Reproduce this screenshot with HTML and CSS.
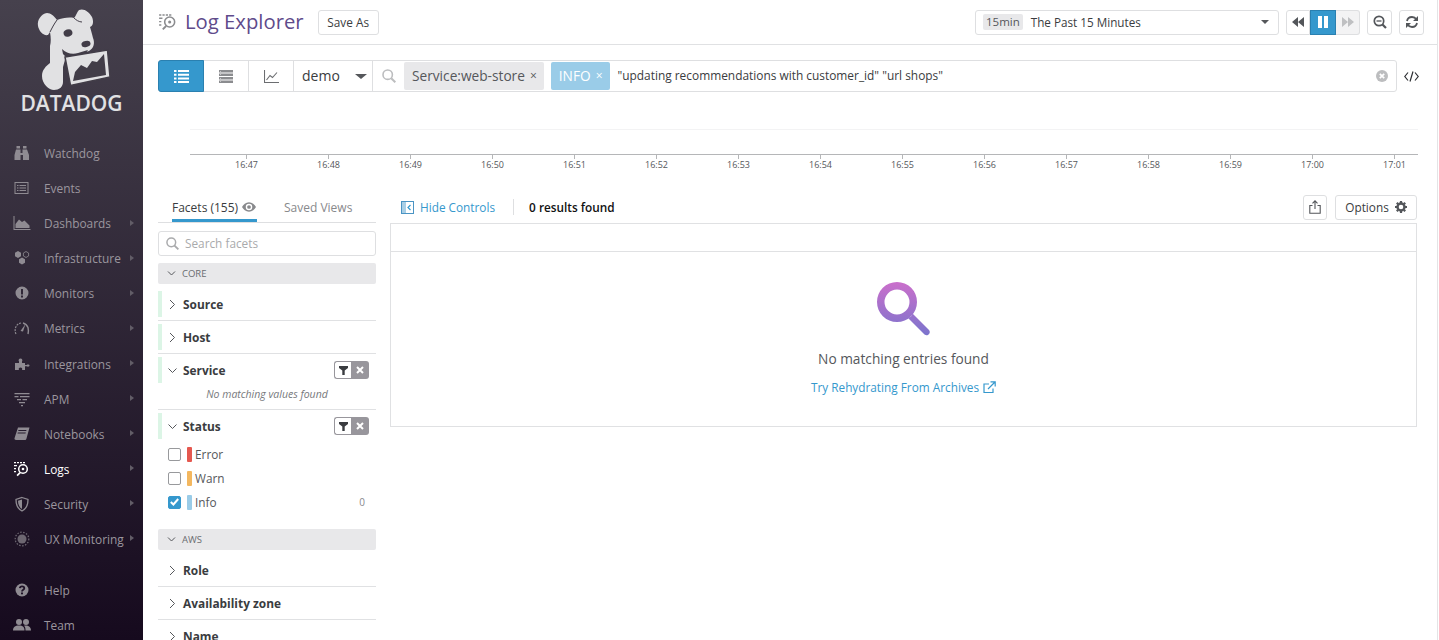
FILE: index.html
```html
<!DOCTYPE html>
<html lang="en">
<head>
    <meta charset="UTF-8">
    <meta name="viewport" content="width=device-width, initial-scale=1.0">
    <title>Log Explorer</title>
    <link rel="stylesheet" href="styles.css">
</head>
<body>
    <nav class="sidebar">
        <div class="logo">
            <svg class="logo-dog" width="143" height="94" viewBox="0 0 143 94">
                <path fill="#e1e1e3" d="M47 13C41 14 37 20 38 26C39 31 43 36 48 35L50 32C51 38 51 42 50 46L50 63C46 66 42 70 42 76C42 84 49 90 54 90C59 90 63 87 63 82L63 67L66 56L72 55C78 54 84 53 89 51C94 48 95 43 93 38C92 34 91 30 90 27C93 26 94 22 92 17C89 12 84 8 79 10C77 12 76 16 74 18C69 17 62 18 57 20C54 16 51 13 47 13Z"/>
                <path fill="none" stroke="#423d48" stroke-width="1" d="M50 32C52 28 54 24 57 20M74 18C76 20 79 22 82 22"/>
                <path fill="#423d48" d="M62 49C66 53 72 55 78 53L88 50L86 53L66 57L63 54Z"/>
                <ellipse fill="#423d48" cx="68" cy="33" rx="4.500" ry="3.600" transform="rotate(-20 68 33)"/>
                <ellipse fill="#423d48" cx="86" cy="44" rx="4.600" ry="3" transform="rotate(-12 86 44)"/>
                <path fill="#e1e1e3" stroke="#423d48" stroke-width="1.500" d="M65 57L107.500 50L110 77L70.500 85.500Z"/>
                <path fill="#423d48" d="M73 81L75 72L81 65L87 68L92 61L97 62L104 54L106 75Z"/>
            </svg>
            <div class="logo-name">DATADOG</div>
        </div>
        <div class="nav-list">
            <a class="nav-item">
                <svg class="nav-icon" viewBox="0 0 18 18"><path d="M3.500 2h3.500v2.500H3.500zM10 2h3.500v2.500H10zM3 5.500h4.500V9h2V5.500H14L16 11V16H10V11H7.500v5H1.500V11z"/></svg>
                <span>Watchdog</span>
            </a>
            <a class="nav-item">
                <svg class="nav-icon" viewBox="0 0 18 18"><path fill-rule="evenodd" d="M1.500 3h14v12h-14zM2.500 4v10h12V4z"/><path d="M4 6h1.500v1H4zM6.500 6h6.500v1H6.500zM4 8.500h1.500v1H4zM6.500 8.500h6.500v1H6.500zM4 11h1.500v1H4zM6.500 11h6.500v1H6.500z"/></svg>
                <span>Events</span>
            </a>
            <a class="nav-item has-sub">
                <svg class="nav-icon" viewBox="0 0 18 18"><path d="M0.500 2h1v13h16v1H0.500z"/><path d="M2.500 14V10L6 5.500L9 8L11.500 6.500L16.500 11.500V14z"/></svg>
                <span>Dashboards</span>
            </a>
            <a class="nav-item has-sub">
                <svg class="nav-icon" viewBox="0 0 18 18"><path d="M5 2l3 1.700v3.600L5 9 2 7.300V3.700zM9 8.500l3 1.700v3.600l-3 1.700-3-1.700v-3.600z"/><path fill="none" stroke="currentColor" stroke-width=".8" d="M13 2.500l2.600 1.500v3L13 8.500 10.400 7V4z"/></svg>
                <span>Infrastructure</span>
            </a>
            <a class="nav-item has-sub">
                <svg class="nav-icon" viewBox="0 0 18 18"><path fill-rule="evenodd" d="M9 2.500a6.500 6.500 0 1 0 0 13a6.500 6.500 0 0 0 0-13zM8 5h2v5.500H8zM8 11.500h2v2H8z"/></svg>
                <span>Monitors</span>
            </a>
            <a class="nav-item has-sub">
                <svg class="nav-icon" viewBox="0 0 18 18"><path fill="none" stroke="currentColor" stroke-width="1.200" stroke-dasharray="2 1" d="M3 15C1 11 2.500 5 8 4"/><path fill="none" stroke="currentColor" stroke-width="1.400" d="M10 4C12 4.500 14 6 15 8.500C15.500 10.500 15.500 13 15 15"/><path d="M7.500 12L12.500 5L10 12.500z"/></svg>
                <span>Metrics</span>
            </a>
            <a class="nav-item has-sub">
                <svg class="nav-icon" viewBox="0 0 18 18"><path d="M2 8h4V6.500C5 5 6 3.500 7.500 3.500S10 5 9 6.500V8h3v2h1.500c1-.7 3-.7 3 .6s-2 1.300-3 .6H12V15H9c.7-1.500 0-2.500-1.500-2.500S5.300 13.500 6 15H2z"/></svg>
                <span>Integrations</span>
            </a>
            <a class="nav-item has-sub">
                <svg class="nav-icon" viewBox="0 0 18 18"><path d="M1.500 3h15v1.200h-15zM1.500 6h4v1.200h-4zM7 6h9.500v1.200H7zM4 9h4v1.200H4zM9.500 9h4.500v1.200H9.500zM6 12h6v1.200H6zM8 15h2v1.200H8z"/></svg>
                <span>APM</span>
            </a>
            <a class="nav-item has-sub">
                <svg class="nav-icon" viewBox="0 0 18 18"><path d="M5 2.500h11.500L13.500 13.500c-.3 1-.8 1.500-2 1.500H3c-1 0-1.700-.7-1.500-1.700zM5.500 5l-.3 1h8l.3-1zM4.800 7.500l-.3 1h8l.3-1z" fill-rule="evenodd"/></svg>
                <span>Notebooks</span>
            </a>
            <a class="nav-item has-sub is-active">
                <svg class="nav-icon" viewBox="0 0 18 18"><path d="M1 2h2v1.300H1zM4 2h2v1.300H4zM7 2h2v1.300H7zM10 2h2v1.300h-2zM1 5h3v1.300H1zM1 8h2v1.300H1zM1 11h2v1.300H1z"/><circle cx="10" cy="9" r="4.300" fill="none" stroke="currentColor" stroke-width="1.500"/><circle cx="10" cy="9" r="1.300"/><path d="M6.500 12l1.200 1.200-3 3-1.200-1.200z"/></svg>
                <span>Logs</span>
            </a>
            <a class="nav-item has-sub">
                <svg class="nav-icon" viewBox="0 0 18 18"><path fill="none" stroke="currentColor" stroke-width="1.300" d="M9 2.500L15 4.500C15 10 13 14 9 16C5 14 3 10 3 4.500z"/><path d="M9 4.500L5 5.800C5 10 6.500 12.500 9 14z"/></svg>
                <span>Security</span>
            </a>
            <a class="nav-item has-sub">
                <svg class="nav-icon nav-icon-dim" viewBox="0 0 18 18"><circle cx="9" cy="9" r="4.500"/><circle cx="9" cy="9" r="6.800" fill="none" stroke="currentColor" stroke-width="1.300" stroke-dasharray="1.500 1.500"/></svg>
                <span>UX Monitoring</span>
            </a>
            <a class="nav-item nav-gap">
                <svg class="nav-icon" viewBox="0 0 18 18"><circle cx="9" cy="9" r="6.500"/><path fill="none" stroke="#1f1227" stroke-width="1.800" d="M6.800 7.200C7 5.800 8 5.300 9 5.300C10.300 5.300 11.300 6 11.300 7.200C11.300 8.700 9 8.700 9 10.500"/><rect x="8" y="11.500" width="2" height="1.800" fill="#1f1227"/></svg>
                <span>Help</span>
            </a>
            <a class="nav-item">
                <svg class="nav-icon" viewBox="0 0 18 18"><circle cx="6" cy="6" r="3"/><circle cx="13" cy="6" r="3"/><path d="M0 14.500C0 11 2 9.500 6 9.500S11.500 11 11.500 14.500zM12.500 14.500C12.500 12 12 10.800 11 9.800C14.500 9 18 10.500 18 14.500z"/></svg>
                <span>Team</span>
            </a>
        </div>
    </nav>

    <main class="main">
        <header class="topbar">
            <svg class="title-icon" width="20" height="20" viewBox="0 0 18 18"><path d="M1 2h2v1.300H1zM4 2h2v1.300H4zM7 2h2v1.300H7zM10 2h2v1.300h-2zM1 5h3v1.300H1zM1 8h2v1.300H1zM1 11h2v1.300H1z"/><circle cx="10.500" cy="9" r="4.500" fill="none" stroke="currentColor" stroke-width="1.400"/><circle cx="10.500" cy="9" r="1.400"/><path d="M6.700 12l1.200 1.200-3 3-1.200-1.200z"/></svg>
            <h1 class="title">Log Explorer</h1>
            <button class="btn save-btn">Save As</button>
            <div class="time-select">
                <span class="time-tag">15min</span>
                <span class="time-label">The Past 15 Minutes</span>
                <span class="caret caret-small"></span>
            </div>
            <div class="play-group">
                <button class="play-btn">
                    <svg width="12" height="10" viewBox="0 0 12 10" fill="#53565a"><path d="M6 0v10L0 5zM12 0v10L6 5z"/></svg>
                </button>
                <button class="play-btn is-on">
                    <svg width="12" height="12" viewBox="0 0 12 12" fill="#fff"><path d="M1 0h4v12H1zM7 0h4v12H7z"/></svg>
                </button>
                <button class="play-btn is-off">
                    <svg width="12" height="10" viewBox="0 0 12 10" fill="#bfc0c2"><path d="M0 0v10l6-5zM6 0v10l6-5z"/></svg>
                </button>
            </div>
            <button class="btn icon-btn zoom-btn">
                <svg width="14" height="14" viewBox="0 0 14 14" fill="none" stroke="#53565a" stroke-width="1.700"><circle cx="6" cy="6" r="4.700"/><path d="M9.500 9.500L13 13" stroke-width="2.200"/><path d="M3.500 6h5" stroke-width="1.300"/></svg>
            </button>
            <button class="btn icon-btn">
                <svg width="14" height="14" viewBox="0 0 14 14" fill="none" stroke="#53565a" stroke-width="1.800"><path d="M2 6C2.500 3.500 4.500 2 7 2C9 2 10.500 3 11.500 4.500"/><path d="M12 8C11.500 10.500 9.500 12 7 12C5 12 3.500 11 2.500 9.500"/><path fill="#53565a" stroke="none" d="M13 1v5H8zM1 13V8h5z"/></svg>
            </button>
        </header>

        <div class="searchbar">
            <div class="search-box">
                <button class="view-tab is-selected">
                    <svg width="15" height="13" viewBox="0 0 15 13" fill="#fff"><path d="M0 0h2.500v2H0zM4 0h11v2H4zM0 3.700h2.500v2H0zM4 3.700h11v2H4zM0 7.400h2.500v2H0zM4 7.400h11v2H4zM0 11h2.500v2H0zM4 11h11v2H4z"/></svg>
                </button>
                <button class="view-tab">
                    <svg width="14" height="13" viewBox="0 0 14 13" fill="#8b8c8f"><path d="M0 0h14v2.500H0zM0 3.500h14V6H0zM0 7h14v2.500H0zM0 10.500h14V13H0z"/><path fill="#fff" d="M1 1h1v.5H1zM1 4.500h1V5H1zM1 8h1v.5H1zM1 11.500h1v.5H1z"/></svg>
                </button>
                <button class="view-tab">
                    <svg width="15" height="13" viewBox="0 0 15 13" fill="none" stroke="#6b6d70" stroke-width="1.100"><path d="M.5 0v12.500H15"/><path d="M2.500 10L6 5.500L8.500 7.500L13 2.500"/></svg>
                </button>
                <div class="index-select">
                    <span>demo</span>
                    <span class="caret"></span>
                </div>
                <div class="search-icon">
                    <svg width="14" height="14" viewBox="0 0 14 14" fill="none" stroke="#bcbdbf" stroke-width="1.600"><circle cx="5.700" cy="5.700" r="4.700"/><path d="M9.200 9.200L13.300 13.300" stroke-width="2"/></svg>
                </div>
                <span class="pill">Service:web-store <i class="pill-x">×</i></span>
                <span class="pill pill-info">INFO <i class="pill-x">×</i></span>
                <span class="query">"updating recommendations with customer_id" "url shops"</span>
                <svg class="query-clear" width="12" height="12" viewBox="0 0 12 12"><circle cx="6" cy="6" r="6" fill="#bcbdbf"/><path d="M3.800 3.800l4.400 4.400M8.200 3.800l-4.400 4.400" stroke="#fff" stroke-width="1.700"/></svg>
            </div>
            <svg class="code-icon" width="15" height="11" viewBox="0 0 15 11" fill="none" stroke="#2d2f33" stroke-width="1.200"><path d="M4 1.500L.8 5.500L4 9.500M11 1.500l3.200 4-3.200 4M9 .5L6 10.500"/></svg>
        </div>

        <svg class="chart" width="1296" height="101" viewBox="0 0 1296 101">
            <path d="M47 37.500H1275" stroke="#f3f3f4"/>
            <path d="M47 62.500H1275" stroke="#b5b6b8"/>
            <path stroke="#b5b6b8" d="M103.500 62v5M185.500 62v5M267.500 62v5M349.500 62v5M431.500 62v5M513.500 62v5M595.500 62v5M677.500 62v5M759.500 62v5M841.500 62v5M923.500 62v5M1005.500 62v5M1087.500 62v5M1169.500 62v5M1251.500 62v5"/>
            <g class="chart-labels">
                <text x="103.500" y="76">16:47</text>
                <text x="185.500" y="76">16:48</text>
                <text x="267.500" y="76">16:49</text>
                <text x="349.500" y="76">16:50</text>
                <text x="431.500" y="76">16:51</text>
                <text x="513.500" y="76">16:52</text>
                <text x="595.500" y="76">16:53</text>
                <text x="677.500" y="76">16:54</text>
                <text x="759.500" y="76">16:55</text>
                <text x="841.500" y="76">16:56</text>
                <text x="923.500" y="76">16:57</text>
                <text x="1005.500" y="76">16:58</text>
                <text x="1087.500" y="76">16:59</text>
                <text x="1169.500" y="76">17:00</text>
                <text x="1251.500" y="76">17:01</text>
            </g>
        </svg>

        <div class="explorer">
            <aside class="facets">
                <div class="facet-tabs">
                    <span class="facet-tab is-current">Facets (155)
                        <svg width="14" height="10" viewBox="0 0 15 10"><path fill="#88898c" fill-rule="evenodd" d="M7.500 0C11 0 13.500 2.500 15 5C13.500 7.500 11 10 7.500 10S1.500 7.500 0 5C1.500 2.500 4 0 7.500 0zM7.500 1.500a3.500 3.500 0 1 0 0 7a3.500 3.500 0 0 0 0-7z"/><circle cx="7.500" cy="5" r="2" fill="#88898c"/></svg>
                    </span>
                    <span class="facet-tab">Saved Views</span>
                </div>
                <div class="facet-search">
                    <svg width="13" height="13" viewBox="0 0 14 14" fill="none" stroke="#a9aaac" stroke-width="1.600"><circle cx="5.700" cy="5.700" r="4.700"/><path d="M9.200 9.200L13.300 13.300" stroke-width="2"/></svg>
                    <span>Search facets</span>
                </div>

                <div class="group-head">
                    <svg class="chev" width="9" height="9" viewBox="0 0 9 9"><path d="M1 2.500L4.500 6L8 2.500"/></svg>
                    CORE
                </div>
                <div class="facet is-core">
                    <div class="facet-head">
                        <svg class="chev" width="9" height="11" viewBox="0 0 9 11"><path d="M2 1l4.500 4.500L2 10"/></svg>
                        <b>Source</b>
                    </div>
                </div>
                <div class="facet is-core">
                    <div class="facet-head">
                        <svg class="chev" width="9" height="11" viewBox="0 0 9 11"><path d="M2 1l4.500 4.500L2 10"/></svg>
                        <b>Host</b>
                    </div>
                </div>
                <div class="facet is-core is-open">
                    <div class="facet-head">
                        <svg class="chev" width="9" height="11" viewBox="0 0 9 11"><path d="M0.500 3.500L4.500 7.500L8.500 3.500"/></svg>
                        <b>Service</b>
                        <span class="facet-tools">
                            <span class="tool-filter"><svg width="9" height="9" viewBox="0 0 9 9"><path fill="#3a3c40" d="M0 0h9v2L5.700 4.500V9H3.300V4.500L0 2z"/></svg></span>
                            <span class="tool-clear"><svg width="8" height="8" viewBox="0 0 8 8"><path d="M1 1l6 6M7 1L1 7" stroke="#fff" stroke-width="2"/></svg></span>
                        </span>
                    </div>
                    <p class="facet-empty">No matching values found</p>
                </div>
                <div class="facet is-core is-open no-line">
                    <div class="facet-head">
                        <svg class="chev" width="9" height="11" viewBox="0 0 9 11"><path d="M0.500 3.500L4.500 7.500L8.500 3.500"/></svg>
                        <b>Status</b>
                        <span class="facet-tools">
                            <span class="tool-filter"><svg width="9" height="9" viewBox="0 0 9 9"><path fill="#3a3c40" d="M0 0h9v2L5.700 4.500V9H3.300V4.500L0 2z"/></svg></span>
                            <span class="tool-clear"><svg width="8" height="8" viewBox="0 0 8 8"><path d="M1 1l6 6M7 1L1 7" stroke="#fff" stroke-width="2"/></svg></span>
                        </span>
                    </div>
                    <ul class="status-list">
                        <li><span class="check"></span><span class="status-bar bar-error"></span>Error</li>
                        <li><span class="check"></span><span class="status-bar bar-warn"></span>Warn</li>
                        <li>
                            <span class="check is-checked"><svg width="9" height="8" viewBox="0 0 9 8" fill="none" stroke="#fff" stroke-width="2"><path d="M.8 4L3.400 6.500L8.200 1"/></svg></span>
                            <span class="status-bar bar-info"></span>Info<span class="status-count">0</span>
                        </li>
                    </ul>
                </div>

                <div class="group-head group-aws">
                    <svg class="chev" width="9" height="9" viewBox="0 0 9 9"><path d="M1 2.500L4.500 6L8 2.500"/></svg>
                    AWS
                </div>
                <div class="facet">
                    <div class="facet-head">
                        <svg class="chev" width="9" height="11" viewBox="0 0 9 11"><path d="M2 1l4.500 4.500L2 10"/></svg>
                        <b>Role</b>
                    </div>
                </div>
                <div class="facet">
                    <div class="facet-head">
                        <svg class="chev" width="9" height="11" viewBox="0 0 9 11"><path d="M2 1l4.500 4.500L2 10"/></svg>
                        <b>Availability zone</b>
                    </div>
                </div>
                <div class="facet">
                    <div class="facet-head">
                        <svg class="chev" width="9" height="11" viewBox="0 0 9 11"><path d="M2 1l4.500 4.500L2 10"/></svg>
                        <b>Name</b>
                    </div>
                </div>
            </aside>

            <section class="results">
                <div class="results-bar">
                    <svg width="13" height="13" viewBox="0 0 13 13"><rect x=".5" y=".5" width="12" height="12" fill="#fff" stroke="#4a94c4"/><rect x="1" y="1" width="4" height="11" fill="#a9cfe6"/><path d="M9.500 4L7 6.500L9.500 9" fill="none" stroke="#3598cd" stroke-width="1.200"/></svg>
                    <a class="hide-link">Hide Controls</a>
                    <span class="results-sep"></span>
                    <strong class="results-count">0 results found</strong>
                    <button class="btn icon-btn share-btn">
                        <svg width="12" height="14" viewBox="0 0 12 14" fill="none" stroke="#53565a" stroke-width="1.100"><path d="M3.500 5.500H.8v7.700h10.400V5.500H8.500"/><path d="M6 9V1M3.500 3.300L6 .8l2.500 2.500"/></svg>
                    </button>
                    <button class="btn options-btn">Options
                        <svg width="12" height="12" viewBox="0 0 12 12"><circle cx="6" cy="6" r="3.500" fill="none" stroke="#53565a" stroke-width="2.400"/><path stroke="#53565a" stroke-width="2.200" d="M6 0v12M0 6h12M1.800 1.800l8.400 8.400M10.200 1.800l-8.400 8.400" stroke-dasharray="2 8 2"/></svg>
                    </button>
                </div>
                <div class="results-table">
                    <div class="table-head"></div>
                    <div class="empty">
                        <svg width="56" height="56" viewBox="0 0 56 56">
                            <defs>
                                <linearGradient id="glass" x1="0" y1="0" x2="0" y2="1">
                                    <stop offset="0" stop-color="#ca6fcb"/>
                                    <stop offset="1" stop-color="#7b74cd"/>
                                </linearGradient>
                            </defs>
                            <path fill="url(#glass)" fill-rule="evenodd" d="M21 1a20 20 0 1 1 0 40a20 20 0 0 1 0-40zM21 8.500a12.500 12.500 0 1 0 0 25a12.500 12.500 0 0 0 0-25zM37 33L53 49C55.500 52 51.500 56 48.500 53.500L32.500 37.500Z"/>
                        </svg>
                        <p class="empty-text">No matching entries found</p>
                        <a class="empty-link">Try Rehydrating From Archives
                            <svg width="13" height="13" viewBox="0 0 13 13" fill="none" stroke="#3598cd" stroke-width="1.200"><path d="M10 7.500V11.500H1V3H6"/><path d="M5 8L11.500 1.500M7.500 .8H12.200V5.500"/></svg>
                        </a>
                    </div>
                </div>
            </section>
        </div>
    </main>
</body>
</html>
```

FILE: styles.css
```css
html, body {
    margin: 0;
    height: 100%;
    overflow: hidden;
}
body {
    display: flex;
    font-family: "Open Sans", Arial, sans-serif;
    font-size: 11.800px;
    color: #3a3c40;
    background: #fff;
}
button {
    font-family: inherit;
    cursor: pointer;
}

/* sidebar */
.sidebar {
    flex: 0 0 143px;
    height: 640px;
    overflow: hidden;
    background: linear-gradient(#46414d, #160a1e);
}
.logo {
    height: 135.400px;
    overflow: hidden;
}
.logo-dog {
    display: block;
}
.logo-name {
    margin-top: -2px;
    text-align: center;
    font-size: 21px;
    line-height: 22px;
    font-weight: 600;
    color: #e1e1e3;
}
.nav-list {
    display: flex;
    flex-direction: column;
}
.nav-item {
    position: relative;
    display: flex;
    align-items: center;
    height: 35.1px;
    padding-left: 13px;
    font-size: 11.900px;
    color: #9b969e;
}
.nav-icon {
    flex: 0 0 18px;
    width: 18px;
    height: 18px;
    margin-right: 13px;
    fill: currentColor;
    color: #8f8b92;
}
.nav-icon-dim {
    opacity: .7;
}
.nav-item.is-active,
.nav-item.is-active .nav-icon {
    color: #fff;
}
.has-sub::after {
    content: "";
    position: absolute;
    left: 130px;
    top: 14px;
    border-left: 4px solid #625d67;
    border-top: 3.500px solid transparent;
    border-bottom: 3.500px solid transparent;
}
.nav-gap {
    margin-top: 16px;
}

/* main column */
.main {
    flex: 1;
    min-width: 0;
    height: 640px;
    margin-right: 1px;
    border-right: 1px solid #e4e4e6;
}
.topbar {
    display: flex;
    align-items: center;
    height: 44px;
    padding: 0 13px 0 15px;
    border-bottom: 1px solid #e0e1e3;
}
.title-icon {
    fill: #8b8c8f;
    color: #8b8c8f;
    margin-right: 7px;
}
.title {
    margin: -2px 14px 0 0;
    font-size: 20.300px;
    font-weight: 400;
    color: #5f4b8b;
}
.btn {
    height: 25px;
    border: 1px solid #dedfe1;
    border-radius: 3px;
    background: #fff;
    color: #3a3c40;
    font-size: 11.800px;
    padding: 0;
}
.save-btn {
    width: 61px;
}
.time-select {
    display: flex;
    align-items: center;
    width: 304px;
    height: 25px;
    box-sizing: border-box;
    margin-left: auto;
    padding: 0 7px;
    border: 1px solid #dedfe1;
    border-radius: 3px;
}
.time-tag {
    padding: 1px 3px;
    margin-right: 8px;
    border-radius: 2px;
    background: #e8e8ea;
    color: #55575b;
    font-size: 11.500px;
    line-height: 14px;
}
.time-label {
    flex: 1;
    font-size: 11.700px;
}
.caret {
    width: 0;
    height: 0;
    border-left: 6px solid transparent;
    border-right: 6px solid transparent;
    border-top: 5px solid #55575b;
}
.caret-small {
    margin-right: 2px;
    border-left-width: 4px;
    border-right-width: 4px;
    border-top-width: 4px;
}
.play-group {
    display: flex;
    margin-left: 7px;
    height: 25px;
}
.play-btn {
    display: flex;
    align-items: center;
    justify-content: center;
    width: 24px;
    padding: 0;
    border: 1px solid #dedfe1;
    border-radius: 3px 0 0 3px;
    background: #fff;
}
.play-btn.is-on {
    width: 26px;
    border: 1px solid #2a80b0;
    border-radius: 0;
    background: #3598cd;
}
.play-btn.is-off {
    border-radius: 0 3px 3px 0;
    border-left: 0;
    background: #f3f3f4;
}
.icon-btn {
    display: flex;
    align-items: center;
    justify-content: center;
    width: 25px;
}
.zoom-btn {
    margin: 0 7px;
}

/* search row */
.searchbar {
    display: flex;
    align-items: center;
    padding: 15px 0 0 15px;
}
.search-box {
    display: flex;
    align-items: center;
    width: 1239px;
    height: 32px;
    box-sizing: border-box;
    border: 1px solid #dedfe1;
    border-radius: 3px;
}
.view-tab {
    display: flex;
    align-items: center;
    justify-content: center;
    flex: 0 0 45px;
    height: 30px;
    padding: 0;
    border: 0;
    border-right: 1px solid #dedfe1;
    background: #fff;
}
.view-tab.is-selected {
    flex: 0 0 46px;
    height: 32px;
    margin: -1px 0 -1px -1px;
    border: 1px solid #2a80b0;
    border-radius: 3px 0 0 3px;
    background: #3598cd;
}
.index-select {
    display: flex;
    align-items: center;
    justify-content: space-between;
    flex: 0 0 79px;
    box-sizing: border-box;
    height: 30px;
    padding: 0 5px 2px 8px;
    border-right: 1px solid #dedfe1;
    font-size: 14px;
}
.index-select .caret {
    margin-top: 2px;
}
.search-icon {
    display: flex;
    justify-content: center;
    flex: 0 0 31px;
}
.pill {
    display: flex;
    align-items: center;
    height: 28px;
    box-sizing: border-box;
    padding: 0 7px 2px 8px;
    margin-right: 7px;
    border-radius: 2px;
    background: #e8e8ea;
    color: #55575b;
    font-size: 13.700px;
}
.pill-x {
    margin-left: 5px;
    font-style: normal;
    font-size: 12px;
}
.pill-info {
    background: #9accE8;
    color: #fff;
}
.query {
    flex: 1;
    margin: -2px 0 0 1px;
    font-size: 11.900px;
    color: #3a3c40;
}
.query-clear {
    margin-right: 8px;
}
.code-icon {
    margin-left: 7px;
}
.chart {
    display: block;
}
.chart-labels text {
    font-size: 9px;
    fill: #55575b;
    text-anchor: middle;
}

/* facets + results */
.explorer {
    display: flex;
    padding-left: 15px;
    overflow: hidden;
}
.facets {
    flex: 0 0 218px;
    min-width: 0;
}
.facet-tabs {
    display: flex;
    height: 30px;
    box-sizing: border-box;
    padding-left: 14px;
    border-bottom: 1px solid #dedfe1;
    font-size: 12px;
    white-space: nowrap;
}
.facet-tab {
    display: flex;
    align-items: flex-start;
    gap: 4px;
    padding-top: 6px;
    color: #88898c;
}
.facet-tab svg {
    margin-top: 3px;
}
.facet-tab.is-current {
    width: 85px;
    margin-right: 27px;
    box-sizing: border-box;
    height: 29px;
    color: #3a3c40;
    border-bottom: 3px solid #3598cd;
}
.facet-search {
    display: flex;
    align-items: center;
    gap: 6px;
    height: 25px;
    box-sizing: border-box;
    margin-top: 8px;
    padding: 0 0 1px 7px;
    border: 1px solid #dedfe1;
    border-radius: 3px;
    color: #a9aaac;
}
.group-head {
    display: flex;
    align-items: center;
    gap: 6px;
    height: 21px;
    margin: 7px 0;
    padding-left: 9px;
    border-radius: 2px;
    background: #e8e8ea;
    color: #6a6c70;
    font-size: 9.500px;
}
.group-aws {
    margin-top: 15px;
}
.chev {
    fill: none;
    stroke: #55575b;
    stroke-width: 1;
}
.facet {
    margin-bottom: 3px;
    border-bottom: 1px solid #e0e1e3;
}
.facet-head {
    display: flex;
    align-items: center;
    gap: 6px;
    height: 26px;
    margin-bottom: 3px;
    padding-left: 10px;
    font-size: 11.900px;
}
.facet.is-core .facet-head {
    border-left: 4px solid #dcf5e6;
    padding-left: 6px;
}
.facet.no-line {
    border-bottom: 0;
    margin-bottom: 0;
}
.facet-tools {
    display: flex;
    margin-left: auto;
    margin-right: 7px;
    height: 18px;
}
.tool-filter {
    display: flex;
    align-items: center;
    justify-content: center;
    width: 17px;
    box-sizing: border-box;
    border: 1px solid #98969c;
    border-right: 0;
    border-radius: 3px 0 0 3px;
}
.tool-clear {
    display: flex;
    align-items: center;
    justify-content: center;
    width: 18px;
    border-radius: 0 3px 3px 0;
    background: #98969c;
}
.facet-empty {
    margin: 0 0 7px;
    text-align: center;
    font-size: 10.500px;
    line-height: 16px;
    font-style: italic;
    color: #77797c;
}
.status-list {
    margin: 0;
    padding: 0 0 0 10px;
    list-style: none;
}
.status-list li {
    display: flex;
    align-items: center;
    height: 24px;
    padding-right: 11px;
    color: #55575b;
}
.check {
    display: flex;
    align-items: center;
    justify-content: center;
    width: 11px;
    height: 11px;
    border: 1px solid #98999c;
    border-radius: 2px;
    margin-right: 6px;
}
.check.is-checked {
    border-color: #3598cd;
    background: #3598cd;
}
.status-bar {
    width: 5px;
    height: 15px;
    margin-right: 3px;
    border-radius: 1px;
}
.bar-error { background: #e5584f; }
.bar-warn { background: #f3b75f; }
.bar-info { background: #9accE8; }
.status-count {
    margin-left: auto;
    color: #88898c;
    font-size: 10px;
}

.results {
    flex: 0 0 1027px;
    margin-left: 14px;
}
.results-bar {
    display: flex;
    align-items: center;
    height: 30px;
    box-sizing: border-box;
    padding: 0 0 2px 11px;
}
.hide-link {
    margin-left: 6px;
    color: #3598cd;
}
.results-sep {
    width: 1px;
    height: 16px;
    margin: 0 15px 0 18px;
    background: #dedfe1;
}
.results-count {
    font-weight: 600;
    color: #111;
}
.share-btn {
    margin-left: auto;
    width: 24px;
}
.options-btn {
    display: flex;
    align-items: center;
    justify-content: center;
    gap: 6px;
    width: 82px;
    margin-left: 8px;
}
.results-table {
    height: 204px;
    box-sizing: border-box;
    border: 1px solid #e0e1e3;
}
.table-head {
    height: 27px;
    border-bottom: 1px solid #e0e1e3;
}
.empty {
    display: flex;
    flex-direction: column;
    align-items: center;
    padding-top: 29px;
}
.empty-text {
    margin: 12px 0 11px;
    font-size: 13.700px;
    color: #55575b;
}
.empty-link {
    display: flex;
    align-items: center;
    gap: 4px;
    color: #3598cd;
}
```
